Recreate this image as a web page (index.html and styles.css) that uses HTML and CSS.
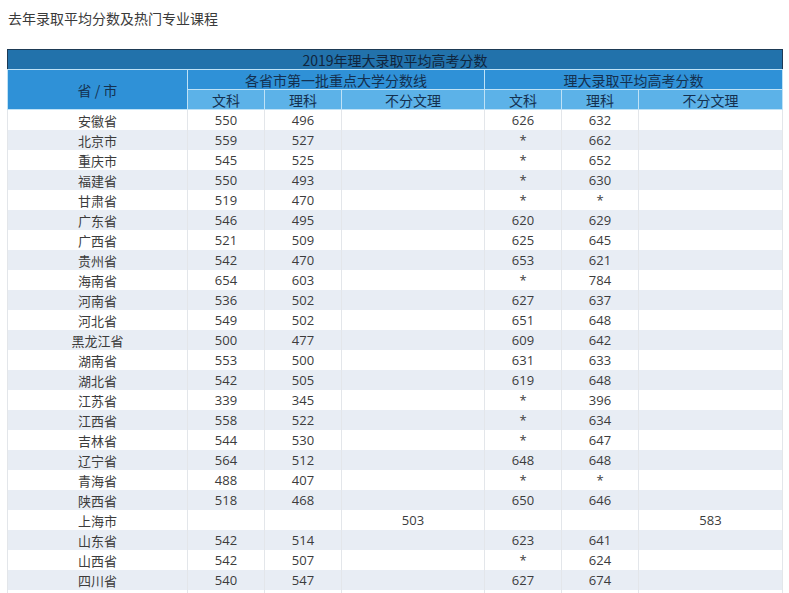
FILE: index.html
```html
<!DOCTYPE html>
<html lang="zh">
<head>
<meta charset="utf-8">
<link rel="stylesheet" href="styles.css">
</head>
<body>
<div class="page">
  <h1 class="title">去年录取平均分数及热门专业课程</h1>
  <table class="scores">
    <colgroup>
      <col class="c-prov"><col class="c-n"><col class="c-n"><col class="c-w"><col class="c-n"><col class="c-n"><col class="c-w2">
    </colgroup>
    <thead>
      <tr class="h1"><th colspan="7">2019年理大录取平均高考分数</th></tr>
      <tr class="h2"><th rowspan="2" class="prov">省 / 市</th><th colspan="3">各省市第一批重点大学分数线</th><th colspan="3">理大录取平均高考分数</th></tr>
      <tr class="h3"><th>文科</th><th>理科</th><th>不分文理</th><th>文科</th><th>理科</th><th>不分文理</th></tr>
    </thead>
    <tbody>
      <tr><td>安徽省</td><td>550</td><td>496</td><td></td><td>626</td><td>632</td><td></td></tr>
      <tr><td>北京市</td><td>559</td><td>527</td><td></td><td>*</td><td>662</td><td></td></tr>
      <tr><td>重庆市</td><td>545</td><td>525</td><td></td><td>*</td><td>652</td><td></td></tr>
      <tr><td>福建省</td><td>550</td><td>493</td><td></td><td>*</td><td>630</td><td></td></tr>
      <tr><td>甘肃省</td><td>519</td><td>470</td><td></td><td>*</td><td>*</td><td></td></tr>
      <tr><td>广东省</td><td>546</td><td>495</td><td></td><td>620</td><td>629</td><td></td></tr>
      <tr><td>广西省</td><td>521</td><td>509</td><td></td><td>625</td><td>645</td><td></td></tr>
      <tr><td>贵州省</td><td>542</td><td>470</td><td></td><td>653</td><td>621</td><td></td></tr>
      <tr><td>海南省</td><td>654</td><td>603</td><td></td><td>*</td><td>784</td><td></td></tr>
      <tr><td>河南省</td><td>536</td><td>502</td><td></td><td>627</td><td>637</td><td></td></tr>
      <tr><td>河北省</td><td>549</td><td>502</td><td></td><td>651</td><td>648</td><td></td></tr>
      <tr><td>黑龙江省</td><td>500</td><td>477</td><td></td><td>609</td><td>642</td><td></td></tr>
      <tr><td>湖南省</td><td>553</td><td>500</td><td></td><td>631</td><td>633</td><td></td></tr>
      <tr><td>湖北省</td><td>542</td><td>505</td><td></td><td>619</td><td>648</td><td></td></tr>
      <tr><td>江苏省</td><td>339</td><td>345</td><td></td><td>*</td><td>396</td><td></td></tr>
      <tr><td>江西省</td><td>558</td><td>522</td><td></td><td>*</td><td>634</td><td></td></tr>
      <tr><td>吉林省</td><td>544</td><td>530</td><td></td><td>*</td><td>647</td><td></td></tr>
      <tr><td>辽宁省</td><td>564</td><td>512</td><td></td><td>648</td><td>648</td><td></td></tr>
      <tr><td>青海省</td><td>488</td><td>407</td><td></td><td>*</td><td>*</td><td></td></tr>
      <tr><td>陕西省</td><td>518</td><td>468</td><td></td><td>650</td><td>646</td><td></td></tr>
      <tr><td>上海市</td><td></td><td></td><td>503</td><td></td><td></td><td>583</td></tr>
      <tr><td>山东省</td><td>542</td><td>514</td><td></td><td>623</td><td>641</td><td></td></tr>
      <tr><td>山西省</td><td>542</td><td>507</td><td></td><td>*</td><td>624</td><td></td></tr>
      <tr><td>四川省</td><td>540</td><td>547</td><td></td><td>627</td><td>674</td><td></td></tr>
      <tr><td></td><td></td><td></td><td></td><td></td><td></td><td></td></tr>
    </tbody>
  </table>
</div>
</body>
</html>
```
FILE: styles.css
```css
html, body {
  margin: 0;
  padding: 0;
  background: #ffffff;
}
body {
  font-family: "Open Sans", "Noto Sans CJK SC", sans-serif;
  color: #333333;
  overflow: hidden;
}
.page {
  padding: 8px 0 0 7px;
  width: 775px;
}
.title {
  margin: 0 0 0 1px;
  font-size: 14px;
  font-weight: normal;
  line-height: 20px;
  color: #3a3a3a;
  font-family: "Noto Sans CJK SC", sans-serif;
}
.scores {
  margin-top: 21px;
  border-collapse: collapse;
  table-layout: fixed;
  width: 775px;
  border: 1px solid #1d3a55;
  font-size: 13px;
}
.c-prov { width: 180px; }
.c-n { width: 77px; }
.c-w { width: 143px; }
.c-w2 { width: 144px; }
.scores th, .scores td {
  padding: 0;
  text-align: center;
  font-weight: normal;
  white-space: nowrap;
}
.scores th {
  height: 19px;
  line-height: 18px;
  font-size: 14px;
  color: #14304f;
  font-family: "Noto Sans CJK SC", sans-serif;
  border: 1px solid #bfe2f6;
}
.scores td {
  height: 20px;
  line-height: 19px;
  border-left: 1px solid #e3e6ea;
  border-right: 1px solid #e3e6ea;
  color: #3c3c3c;
}
.h1 th {
  background: #2272ab;
  color: #10253d;
  border-top-color: #1d3a55;
  border-left-color: #1d3a55;
  border-right-color: #1d3a55;
}
.h2 th { background: #2f91d7; }
.h3 th { background: #5cb2e8; }
.scores th.prov { background: #2f91d7; }
.scores td:first-child {
  font-family: "Noto Sans CJK SC", sans-serif;
}
.scores tbody tr:nth-child(even) td {
  background: #e8edf4;
}
```
